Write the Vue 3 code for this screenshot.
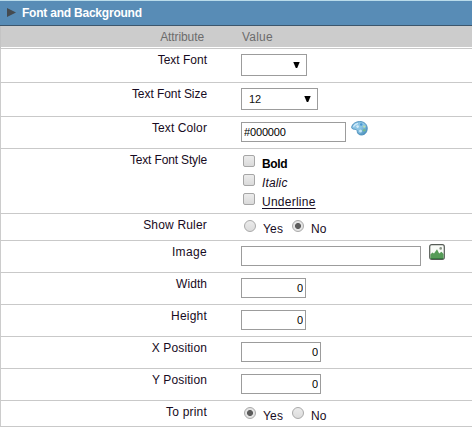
<script setup>
import { ref } from 'vue'

const styles = [
  { text: 'Bold', cls: 'bold' },
  { text: 'Italic', cls: 'italic' },
  { text: 'Underline', cls: 'underline' },
]
const rows = ref([
  { label: 'Text Font', kind: 'select', value: '', height: 34, width: 66, track: 0 },
  { label: 'Text Font Size', kind: 'select', value: '12', height: 34, width: 77, track: -0.07 },
  { label: 'Text Color', kind: 'text', value: '#000000', height: 32, width: 105, icon: 'palette', track: 0.1 },
  { label: 'Text Font Style', kind: 'checks', height: 65, track: -0.15 },
  { label: 'Show Ruler', kind: 'radio', value: 'No', height: 27, track: 0.18 },
  { label: 'Image', kind: 'text', value: '', height: 32, width: 180, icon: 'image', track: 0.35 },
  { label: 'Width', kind: 'number', value: '0', height: 32, width: 65, track: 0.05 },
  { label: 'Height', kind: 'number', value: '0', height: 32, width: 65, track: 0.2 },
  { label: 'X Position', kind: 'number', value: '0', height: 32, width: 80, track: 0.12 },
  { label: 'Y Position', kind: 'number', value: '0', height: 32, width: 80, track: 0.12 },
  { label: 'To print', kind: 'radio', value: 'Yes', height: 26, track: 0.2 },
])
</script>

<template>
  <div class="panel">
    <div class="title">
      <svg class="arrow" width="9" height="9" viewBox="0 0 9 9"><path d="M0 0L9 4.5L0 9Z" fill="#454b50" /></svg>
      <span>Font and Background</span>
    </div>
    <div class="head">
      <div class="attr">Attribute</div>
      <div class="val">Value</div>
    </div>
    <div v-for="row in rows" :key="row.label" class="row" :style="{ height: row.height + 'px' }">
      <div class="label" :style="{ letterSpacing: row.track + 'px' }">{{ row.label }}</div>
      <div class="value">
        <div v-if="row.kind === 'select'" class="select" :style="{ width: row.width + 'px' }">
          <span>{{ row.value }}</span>
          <svg width="7" height="6" viewBox="0 0 7 6"><path d="M.3 0H6.7L4.2 6H2.8Z" fill="#000" /></svg>
        </div>
        <div v-else-if="row.kind === 'checks'" class="checks">
          <div v-for="s in styles" :key="s.text" class="check">
            <span class="box"></span><span class="opt" :class="s.cls">{{ s.text }}</span>
          </div>
        </div>
        <div v-else-if="row.kind === 'radio'" class="radios">
          <div v-for="o in ['Yes', 'No']" :key="o" class="choice">
            <span class="radio" :class="{ on: row.value === o }"></span><span class="opt">{{ o }}</span>
          </div>
        </div>
        <input v-else class="field" :class="row.kind" type="text" v-model="row.value" :style="{ width: row.width + 'px' }" />
        <svg v-if="row.icon === 'palette'" class="palette" width="17" height="15" viewBox="0 0 17 15">
          <defs>
            <linearGradient id="pal" x1="0" y1="0" x2="1" y2="1">
              <stop offset="0" stop-color="#8fc6e8" /><stop offset=".5" stop-color="#8cc5e4" /><stop offset="1" stop-color="#3c83b6" />
            </linearGradient>
          </defs>
          <path d="M.7 6.2C1.2 3 4.4.8 8.5.6C12.8.4 16 3 16.2 7C16.4 10.8 14.2 13.9 10.6 14C8 14.1 6.2 12.5 6.2 10.3C6.2 8.8 5.2 8.5 3.7 8.3C1.8 8.1.5 7.6.7 6.2Z" fill="url(#pal)" stroke="#4389b8" stroke-width=".9" />
          <path d="M2.4 5.8Q3.8 3.2 7 2.4" stroke="#cfeafa" stroke-width="1.2" fill="none" />
          <circle cx="6.6" cy="5.6" r="1.3" fill="#d6ecf7" />
          <circle cx="10.2" cy="3.5" r="1.2" fill="#4b97d0" />
          <circle cx="13.3" cy="5.6" r="1.2" fill="#b9dfae" />
          <circle cx="13.2" cy="9.3" r="1.3" fill="#72b989" />
          <circle cx="9.5" cy="9.9" r="1.5" fill="#c6e6f5" />
        </svg>
        <svg v-if="row.icon === 'image'" class="image" width="16" height="16" viewBox="0 0 16 16">
          <rect x=".7" y=".7" width="14.6" height="14.6" rx="2" fill="#f8fbf7" stroke="#555b55" stroke-width="1.2" />
          <path d="M1.4 10.5L3.4 8.4L5 9.6L8 5.3L10.2 9.6L12.4 7.8L14.6 10V14.6H1.4Z" fill="#559b57" />
          <path d="M2 14.5H14" stroke="#367a40" stroke-width="1" />
          <circle cx="11.7" cy="4.4" r="1.3" fill="#8b9688" />
        </svg>
      </div>
    </div>
  </div>
</template>

<style>
body { margin: 0; background: #fff; }
</style>

<style scoped>
* { box-sizing: border-box; }
.panel {
  width: 472px;
  border-top: 1px solid #b9dbea;
  font: 12px/14px "Liberation Sans", Arial, sans-serif;
  color: #170b22;
}
.title {
  height: 25px;
  display: flex;
  align-items: center;
  padding: 0 0 1px 7px;
  gap: 6px;
  background: #588cb6;
  border-bottom: 1px solid #3c566c;
  color: #fff;
  font-weight: bold;
  letter-spacing: -.22px;
}
.arrow { flex: none; }
.head {
  height: 23px;
  display: flex;
  background: #ccc;
  border-left: 1px solid #c4c4c4;
  border-bottom: 1px solid #c8c8c8;
  box-shadow: inset 0 -1px 0 #fff;
  color: #6c6c6c;
  padding-top: 4px;
}
.attr { width: 203px; text-align: right; letter-spacing: -.1px; }
.val { padding-left: 38px; letter-spacing: .2px; }
.row {
  display: flex;
  border-left: 1px solid #ccc;
  border-bottom: 1px solid #c9c9c9;
}
.label { width: 206px; padding-top: 4px; text-align: right; flex: none; }
.value { display: flex; padding: 5px 0 0 34px; align-items: flex-start; }
.select {
  height: 22px;
  border: 1px solid #9c9c9c;
  display: flex;
  align-items: center;
  justify-content: space-between;
  padding: 0 6px 0 7px;
  font-size: 11px;
  color: #111;
}
.field {
  height: 20px;
  margin: 0;
  padding: 0 2px 1px;
  border: 1px solid #9c9c9c;
  border-radius: 0;
  background: #fff;
  outline: none;
  font: 11px "Liberation Sans", Arial, sans-serif;
  letter-spacing: -.15px;
  color: #000;
}
.number { text-align: right; }
.palette { margin: -1px 0 0 5px; }
.image { margin: -2px 0 0 8px; }
.checks { padding: 1px 0 0 2px; }
.check { display: flex; height: 19px; }
.box {
  width: 12px;
  height: 12px;
  border: 1px solid #a6a6a6;
  border-radius: 2px;
  background: linear-gradient(#ececec, #dadada);
  margin-right: 7px;
}
.opt { padding-top: 2px; }
.bold { font-weight: bold; color: #000; letter-spacing: -.4px; }
.italic { font-style: italic; letter-spacing: .15px; }
.underline { text-decoration: underline; text-underline-offset: 2px; letter-spacing: .25px; }
.radios { display: flex; padding: 1px 0 0 3px; }
.choice { display: flex; width: 48px; }
.choice .opt { letter-spacing: .2px; }
.radio {
  width: 12px;
  height: 12px;
  border: 1px solid #a9a9a9;
  border-radius: 50%;
  background: linear-gradient(#ebebeb, #dcdcdc);
  margin-right: 7px;
}
.radio.on { background: radial-gradient(circle, #5c5c5c 0 2.6px, #e4e4e4 3.4px); }
</style>
